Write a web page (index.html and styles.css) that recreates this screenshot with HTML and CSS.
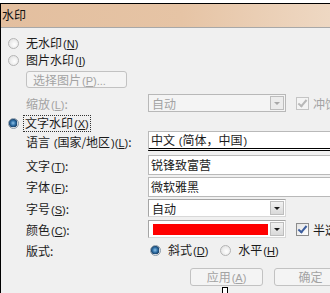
FILE: index.html
```html
<html lang="zh">
<head>
    <meta charset="UTF-8">
    <title>水印</title>
    <link rel="stylesheet" href="styles.css">
</head>
<body>
    <div class="dlg">
        <div class="titlebar">水印</div>
        <div class="content">
            <div class="row r1"><span class="radio"></span><span class="rtext">无水印<span class="key">(<u>N</u>)</span></span></div>
            <div class="row r2"><span class="radio"></span><span class="rtext">图片水印<span class="key">(<u>I</u>)</span></span></div>
            <div class="row r3"><button class="btn pick">选择图片<span class="key">(<u>P</u>)...</span></button></div>
            <div class="row r4 lrow">
                <span class="label dis">缩放<span class="key">(<u>L</u>)</span>:</span>
                <div class="combo dis">自动<span class="drop"></span></div>
                <span class="check dis"><i></i></span><span class="dis ctext">冲蚀</span>
            </div>
            <div class="row r5"><span class="radio on"></span><span class="rtext focus">文字水印<span class="key">(<u>X</u>)</span></span></div>
            <div class="row r6 lrow">
                <span class="label">语言 <span class="key">(</span>国家/地区<span class="key">)(<u>L</u>)</span>:</span>
                <div class="field lang">中文 <span class="key">(</span>简体，中国<span class="key">)</span></div>
            </div>
            <div class="row r7 lrow">
                <span class="label">文字<span class="key">(<u>T</u>)</span>:</span>
                <div class="field">锐锋致富营</div>
            </div>
            <div class="row r8 lrow">
                <span class="label">字体<span class="key">(<u>F</u>)</span>:</span>
                <div class="field">微软雅黑</div>
            </div>
            <div class="row r9 lrow">
                <span class="label">字号<span class="key">(<u>S</u>)</span>:</span>
                <div class="combo">自动<span class="drop"></span></div>
            </div>
            <div class="row r10 lrow">
                <span class="label">颜色<span class="key">(<u>C</u>)</span>:</span>
                <div class="combo"><span class="swatch"></span><span class="drop"></span></div>
                <span class="check"><i></i></span><span class="ctext">半透明</span>
            </div>
            <div class="row r11 lrow">
                <span class="label">版式:</span>
                <span class="radio on"></span><span class="rtext">斜式<span class="key">(<u>D</u>)</span></span>
                <span class="radio second"></span><span class="rtext">水平<span class="key">(<u>H</u>)</span></span>
            </div>
            <div class="row r12">
                <button class="btn apply">应用<span class="key">(<u>A</u>)</span></button>
                <button class="btn ok">确定</button>
            </div>
        </div>
        <div class="cursor"></div>
    </div>
</body>
</html>
```

FILE: styles.css
```css
body{
    margin: 0;
    padding: 0;
    width: 330px;
    height: 293px;
    overflow: hidden;
    background-color: #ffffff;
    font-family: "Noto Sans CJK SC", "Noto Sans", sans-serif;
    font-size: 12px;
    color: #1b1b1b;
}

.dlg{
    position: relative;
    margin-top: 3px;
    height: 290px;
    border-top: solid 1px #000;
    border-left: solid 1px #000;
    background-color: #f0f0f0;
}

.titlebar{
    height: 23px;
    line-height: 22px;
    padding-left: 1px;
    border-bottom: solid 1px #a8a8a8;
    background-image: linear-gradient(to right, #e3bf9f 0%, #e6c4a5 55%, #eed8c3 100%);
    color: #111;
}

.key{
    font-family: "Liberation Sans", sans-serif;
    font-size: 11px;
    margin-left: 1px;
}

.row{
    display: flex;
    align-items: center;
    padding-left: 7px;
}
.lrow{
    padding-left: 25px;
}

.r1{ margin-top: 7px; height: 16px; }
.r2{ margin-top: 1px; height: 16px; }
.r3{ margin-top: 3px; height: 17px; padding-left: 25px; }
.r4{ margin-top: 6px; height: 18px; }
.r5{ margin-top: 3px; height: 16px; }
.r6{ margin-top: 0; height: 20px; }
.r7{ margin-top: 4px; height: 20px; }
.r8{ margin-top: 2px; height: 19px; }
.r9{ margin-top: 3px; height: 18px; }
.r10{ margin-top: 3px; height: 18px; }
.r11{ margin-top: 4px; height: 17px; }
.r12{ margin-top: 9px; height: 18px; padding-left: 189px; }

.radio{
    display: inline-block;
    width: 9px;
    height: 9px;
    border: solid 1px #b4b4b4;
    border-radius: 50%;
    background-image: radial-gradient(circle at 60% 60%, #ffffff 0%, #dcdcdc 100%);
    flex-shrink: 0;
}
.radio.on{
    border-color: #8a9aa8;
    background-image: radial-gradient(circle at 45% 45%, #8ec2e8 0%, #2f6fa6 35%, #163e66 60%, #d9dde2 64%, #f4f4f4 100%);
}
.rtext{
    margin-left: 5px;
    padding: 0 1px;
    line-height: 14px;
    border: solid 1px transparent;
    white-space: nowrap;
}
.focus{
    border: dotted 1px #333;
    margin-left: 4px;
}

.label{
    width: 122px;
    flex-shrink: 0;
    white-space: nowrap;
}
.dis{
    color: #a3a3a3;
}

.btn{
    font-family: "Noto Sans CJK SC", sans-serif;
    font-size: 12px;
    color: #a3a3a3;
    background-color: #f4f4f4;
    border: solid 1px #c2c2c2;
    border-radius: 3px;
    padding: 0;
    line-height: 16px;
    flex-shrink: 0;
}
.pick{
    width: 101px;
    height: 17px;
    text-align: left;
    padding-left: 6px;
}
.apply{
    width: 73px;
    height: 18px;
}
.ok{
    width: 73px;
    height: 18px;
    margin-left: 11px;
}

.combo{
    display: flex;
    align-items: center;
    position: relative;
    box-sizing: border-box;
    width: 138px;
    height: 18px;
    padding-left: 3px;
    border: solid 1px #a5a5a5;
    border-right-color: #d8d8d8;
    border-bottom-color: #d8d8d8;
    background-color: #fff;
    flex-shrink: 0;
}
.combo.dis{
    background-color: #f4f4f4;
    border-color: #b8b8b8;
}
.drop{
    margin-left: auto;
    width: 14px;
    height: 14px;
    margin-right: 1px;
    box-sizing: border-box;
    border: solid 1px #bdbdbd;
    background-image: linear-gradient(#f2f2f2, #d9d9d9);
    display: flex;
    align-items: center;
    justify-content: center;
}
.drop::after{
    content: "";
    border-left: 3px solid transparent;
    border-right: 3px solid transparent;
    border-top: 3px solid #1a1a1a;
    margin-top: 1px;
}
.combo.dis .drop{
    background-image: none;
    background-color: #ececec;
}
.combo.dis .drop::after{
    border-top-color: #a8a8a8;
}
.swatch{
    width: 115px;
    height: 11px;
    margin-left: 1px;
    background-color: #ff0000;
}

.check{
    display: inline-block;
    width: 11px;
    height: 11px;
    margin-left: 10px;
    border: solid 1px #8c8c8c;
    background-image: linear-gradient(135deg, #e4e4e4, #ffffff);
    position: relative;
    flex-shrink: 0;
}
.check i{
    position: absolute;
    left: 3px;
    top: 0px;
    width: 3px;
    height: 7px;
    border-right: solid 2px #3d5e9e;
    border-bottom: solid 2px #3d5e9e;
    transform: rotate(40deg);
}
.check.dis{
    border-color: #c4c4c4;
    background-image: none;
    background-color: #f4f4f4;
}
.check.dis i{
    border-color: #b8b8b8;
}
.ctext{
    margin-left: 4px;
    white-space: nowrap;
}

.field{
    box-sizing: border-box;
    width: 200px;
    height: 20px;
    padding-left: 2px;
    line-height: 18px;
    background-color: #fff;
    border: solid 1px #b9b9b9;
    border-right: none;
    flex-shrink: 0;
}
.field.lang{
    border-bottom: double 3px #000;
    line-height: 16px;
}

.r11 .radio{
    margin-left: 2px;
}
.r11 .second{
    margin-left: 10px;
}

.cursor{
    position: absolute;
    left: 221px;
    top: 283px;
    width: 4px;
    height: 8px;
    border: solid 1px #000;
    background-color: #fff;
}
```
